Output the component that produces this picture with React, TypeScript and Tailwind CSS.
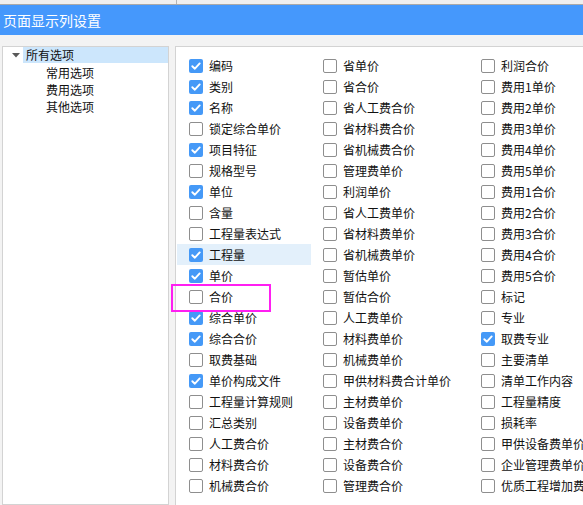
import React from "react";

type Item = { label: string; checked?: boolean; hl?: boolean };

const col1: Item[] = [
  { label: "编码", checked: true },
  { label: "类别", checked: true },
  { label: "名称", checked: true },
  { label: "锁定综合单价" },
  { label: "项目特征", checked: true },
  { label: "规格型号" },
  { label: "单位", checked: true },
  { label: "含量" },
  { label: "工程量表达式" },
  { label: "工程量", checked: true, hl: true },
  { label: "单价", checked: true },
  { label: "合价" },
  { label: "综合单价", checked: true },
  { label: "综合合价", checked: true },
  { label: "取费基础" },
  { label: "单价构成文件", checked: true },
  { label: "工程量计算规则" },
  { label: "汇总类别" },
  { label: "人工费合价" },
  { label: "材料费合价" },
  { label: "机械费合价" },
];

const col2: Item[] = [
  "省单价",
  "省合价",
  "省人工费合价",
  "省材料费合价",
  "省机械费合价",
  "管理费单价",
  "利润单价",
  "省人工费单价",
  "省材料费单价",
  "省机械费单价",
  "暂估单价",
  "暂估合价",
  "人工费单价",
  "材料费单价",
  "机械费单价",
  "甲供材料费合计单价",
  "主材费单价",
  "设备费单价",
  "主材费合价",
  "设备费合价",
  "管理费合价",
].map((l) => ({ label: l }));

const col3: Item[] = [
  { label: "利润合价" },
  { label: "费用1单价" },
  { label: "费用2单价" },
  { label: "费用3单价" },
  { label: "费用4单价" },
  { label: "费用5单价" },
  { label: "费用1合价" },
  { label: "费用2合价" },
  { label: "费用3合价" },
  { label: "费用4合价" },
  { label: "费用5合价" },
  { label: "标记" },
  { label: "专业" },
  { label: "取费专业", checked: true },
  { label: "主要清单" },
  { label: "清单工作内容" },
  { label: "工程量精度" },
  { label: "损耗率" },
  { label: "甲供设备费单价" },
  { label: "企业管理费单价" },
  { label: "优质工程增加费" },
];

function Box({ checked }: { checked?: boolean }) {
  if (checked) {
    return (
      <span className="flex h-[14px] w-[14px] shrink-0 items-center justify-center rounded-[2px] bg-[#4599f7]">
        <svg width="14" height="14" viewBox="0 0 14 14">
          <path
            d="M3.3 7.2 L5.9 9.7 L10.7 4.4"
            fill="none"
            stroke="#ffffff"
            strokeWidth="1.9"
            strokeLinecap="round"
            strokeLinejoin="round"
          />
        </svg>
      </span>
    );
  }
  return (
    <span className="h-[14px] w-[14px] shrink-0 rounded-[2px] border border-[#8e8e8e] bg-white" />
  );
}

function Row({ item }: { item: Item }) {
  return (
    <div
      className={`flex h-[21px] items-center gap-[6px] whitespace-nowrap pl-[12px] ${
        item.hl ? "bg-[#e3f0fb]" : ""
      }`}
    >
      <Box checked={item.checked} />
      <span className="text-[12px] leading-[14px] text-[#111111]">{item.label}</span>
    </div>
  );
}

export default function App() {
  return (
    <div
      className="relative flex h-[505px] w-[583px] flex-col overflow-hidden bg-[#f3f3f3]"
      style={{ fontFamily: '"Noto Sans CJK SC", "Noto Sans", sans-serif' }}
    >
      {/* top strip */}
      <div className="flex h-[5px] shrink-0 border-b border-[#a9a9a9] bg-[#efefef]">
        <div className="h-full w-[177px] border-r border-[#b5b5b5]" />
      </div>
      {/* title bar */}
      <div className="flex h-[30px] shrink-0 items-center bg-[#4598fc] pl-[3px] text-[14px] text-white">
        页面显示列设置
      </div>
      {/* body */}
      <div className="flex min-h-0 flex-1 pt-[11px]">
        {/* left tree */}
        <div className="ml-[2px] w-[167px] shrink-0 border border-[#d3d3d3] bg-white pt-0">
          <div className="flex h-[17px] items-start">
            <div className="flex h-[16px] w-[20px] items-center justify-end pr-[3px]">
              <svg width="8" height="5" viewBox="0 0 8 5">
                <path d="M0 0 L8 0 L4 4.5 Z" fill="#595959" />
              </svg>
            </div>
            <div className="flex h-[16px] flex-1 items-center bg-[#cce6fc] pl-[3px] text-[12px] leading-[14px] text-[#111111]">
              所有选项
            </div>
          </div>
          {["常用选项", "费用选项", "其他选项"].map((t) => (
            <div
              key={t}
              className="flex h-[17px] items-center pl-[43px] text-[12px] leading-[14px] text-[#111111]"
            >
              {t}
            </div>
          ))}
        </div>
        {/* right options */}
        <div className="ml-[6px] flex-1 border-l border-t border-[#d3d3d3] bg-white pl-[1px] pt-[8px]">
          <div className="grid grid-cols-[134px_158px_200px]">
            <div className="flex flex-col">
              {col1.map((it) => (
                <Row key={it.label} item={it} />
              ))}
            </div>
            <div className="flex flex-col">
              {col2.map((it) => (
                <Row key={it.label} item={it} />
              ))}
            </div>
            <div className="flex flex-col">
              {col3.map((it) => (
                <Row key={it.label} item={it} />
              ))}
            </div>
          </div>
        </div>
      </div>
      {/* annotation overlay */}
      <div className="absolute left-[171px] top-[284px] h-[28px] w-[100px] border-2 border-[#ff1ff2]" />
    </div>
  );
}
